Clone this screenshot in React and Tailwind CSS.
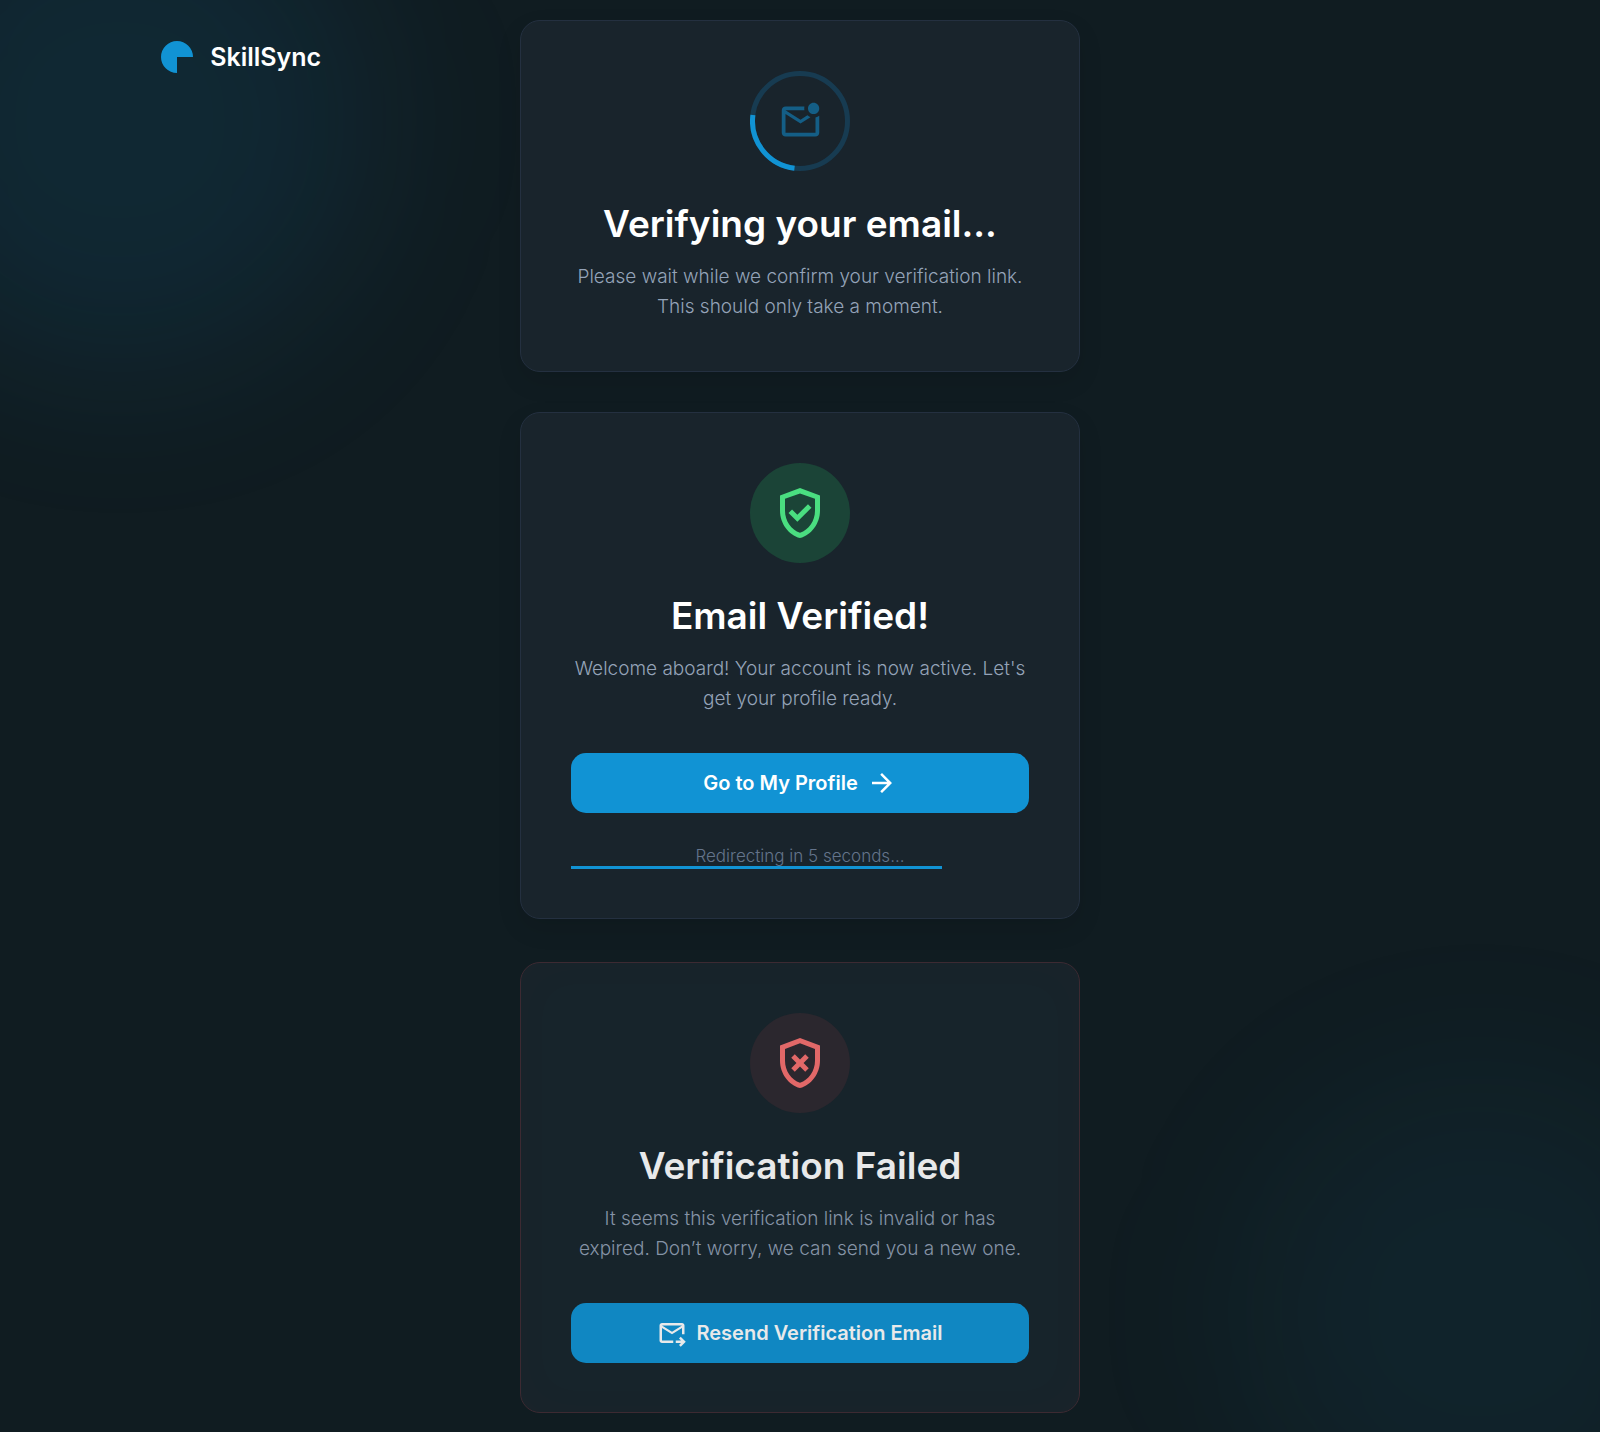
import {
  MdArrowForward,
  MdOutlineGppBad,
  MdOutlineGppGood,
  MdOutlineMarkEmailUnread,
} from "react-icons/md";

function Card({ title, text, icon, className = "", titleClass = "", textClass = "", children }) {
  return (
    <section
      className={"flex flex-col items-center rounded-[20px] border px-[50px] pt-[50px] pb-[49px] text-center " + className}
    >
      {icon}
      <h1 className={"mt-[30px] text-[37px] leading-[46px] font-semibold " + titleClass}>{title}</h1>
      <p className={"mt-[15px] text-[19px] leading-[30px] font-light " + textClass}>{text}</p>
      {children}
    </section>
  );
}

function Spinner() {
  return (
    <div className="relative flex size-[100px] items-center justify-center">
      <svg viewBox="0 0 100 100" className="absolute inset-0 size-full" fill="none" strokeWidth="5">
        <circle cx="50" cy="50" r="47.5" stroke="#173b51" />
        <path d="M2.9 44A47.5 47.5 0 0 0 44.5 97.2" stroke="#1193d4" />
      </svg>
      <MdOutlineMarkEmailUnread className="size-[45px] text-[#145e86]" />
    </div>
  );
}

function ForwardMailIcon() {
  return (
    <svg viewBox="0 0 24 24" className="size-[30px]" fill="currentColor" aria-hidden="true">
      <path d="M20 4H4c-1.1 0-2 .9-2 2v12c0 1.1.9 2 2 2h9v-2H4V8l8 5 8-5v5h2V6c0-1.1-.9-2-2-2Zm-8 7L4 6h16l-8 5Z" />
      <path d="m19 23-1.4-1.4 1.6-1.6H15v-2h4.2l-1.6-1.6L19 15l4 4-4 4Z" />
    </svg>
  );
}

export default function App() {
  return (
    <div className="relative min-h-screen overflow-hidden bg-[#101c21] font-['Inter',sans-serif]">
      <div className="absolute -top-[130px] -left-[130px] size-[500px] rounded-full bg-[#1193d4]/10 blur-[80px]" />
      <div className="absolute -right-[120px] -bottom-[120px] size-[480px] rounded-full bg-[#1193d4]/6 blur-[80px]" />
      <div className="relative grid grid-cols-[1fr_minmax(0,560px)_1fr]">
        <header className="pt-[38px] pl-[31%]">
          <a href="#" className="flex items-center gap-[17px] text-white">
            <svg viewBox="0 0 32 32" className="size-8" fill="#1193d4" aria-hidden="true">
              <path d="M16 0a16 16 0 0 1 16 16H16v16a16 16 0 0 1 0-32Z" />
            </svg>
            <span className="text-[25px] leading-[38px] font-semibold">SkillSync</span>
          </a>
        </header>
        <main className="flex flex-col pt-5 pb-[19px]">
          <Card
            className="mb-10 border-[#243040] bg-[#19242c] shadow-[0_10px_25px_rgba(0,0,0,0.1)]"
            icon={<Spinner />}
            title="Verifying your email..."
            titleClass="text-white"
            textClass="text-[#94a3b8]"
            text={
              <>
                Please wait while we confirm your verification link.
                <br />
                This should only take a moment.
              </>
            }
          />
          <Card
            className="mb-[43px] border-[#243040] bg-[#19242c] shadow-[0_10px_25px_rgba(0,0,0,0.1)]"
            icon={
              <div className="flex size-[100px] items-center justify-center rounded-full bg-[#1b4437]">
                <MdOutlineGppGood className="size-[60px] text-[#4ade80]" />
              </div>
            }
            title="Email Verified!"
            titleClass="text-white"
            textClass="text-[#94a3b8]"
            text={
              <>
                Welcome aboard! Your account is now active. Let's
                <br />
                get your profile ready.
              </>
            }
          >
            <button className="mt-[39px] flex h-[60px] w-full items-center justify-center gap-[9px] rounded-[15px] bg-[#1193d4] text-[20px] font-semibold text-white">
              Go to My Profile
              <MdArrowForward className="size-[30px]" />
            </button>
            <div className="relative mt-[31px] w-full">
              <p className="text-[17px] leading-[25px] font-light text-[#64748b]">Redirecting in 5 seconds...</p>
              <div className="absolute bottom-0 left-0 h-[3px] w-[81%] bg-[#1193d4]" />
            </div>
          </Card>
          <Card
            className="border-[#3d2a32] bg-[#17242b] shadow-[inset_0_0_50px_rgba(239,68,68,0.02)]"
            icon={
              <div className="flex size-[100px] items-center justify-center rounded-full bg-[#2b272e]">
                <MdOutlineGppBad className="size-[60px] text-[#e26868]" />
              </div>
            }
            title="Verification Failed"
            titleClass="text-[#e8e9ea]"
            textClass="text-[#8593a6]"
            text={
              <>
                It seems this verification link is invalid or has
                <br />
                expired. Don’t worry, we can send you a new one.
              </>
            }
          >
            <button className="mt-[39px] flex h-[60px] w-full items-center justify-center gap-[9px] rounded-[15px] bg-[#1087c2] text-[20px] font-semibold text-[#e8e9ea]">
              <ForwardMailIcon />
              Resend Verification Email
            </button>
          </Card>
        </main>
      </div>
    </div>
  );
}
